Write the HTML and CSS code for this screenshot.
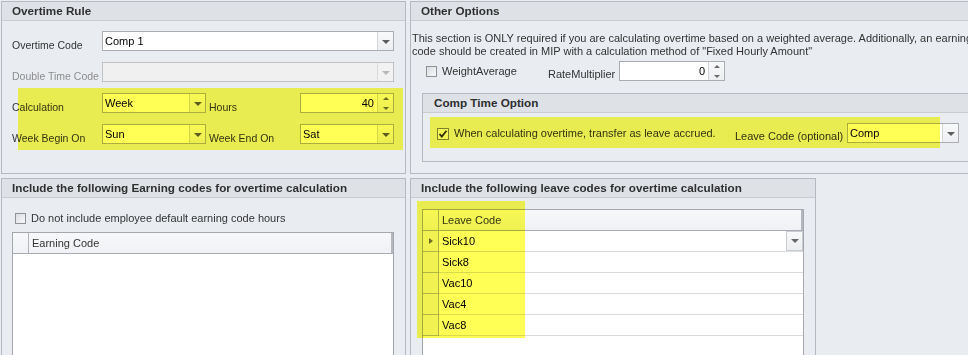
FILE: index.html
```html
<!DOCTYPE html>
<html lang="en">
<head>
    <meta charset="UTF-8">
    <meta name="viewport" content="width=device-width, initial-scale=1.0">
    <title>Overtime Rule</title>
    <link rel="stylesheet" href="styles.css">
</head>
<body>

    <div class="layout">

        <!-- Overtime rule -->
        <div class="panel">
            <div class="panel-head">Overtime Rule</div>
            <div class="form-grid">
                <span class="lbl">Overtime Code</span>
                <div class="combo span3"><span class="val">Comp 1</span><span class="drop"></span></div>

                <span class="lbl off">Double Time Code</span>
                <div class="combo span3 off"><span class="val"></span><span class="drop"></span></div>

                <span class="lbl">Calculation</span>
                <div class="combo"><span class="val">Week</span><span class="drop"></span></div>
                <span class="lbl pad">Hours</span>
                <div class="spin"><span class="val">40</span><span class="spin-btns"><i class="up"></i><i class="down"></i></span></div>

                <span class="lbl">Week Begin On</span>
                <div class="combo"><span class="val">Sun</span><span class="drop"></span></div>
                <span class="lbl pad">Week End On</span>
                <div class="combo"><span class="val">Sat</span><span class="drop"></span></div>
            </div>
            <div class="mark mark-rule"></div>
        </div>

        <!-- Other options -->
        <div class="panel">
            <div class="panel-head">Other Options</div>
            <div class="note">
                This section is ONLY required if you are calculating overtime based on a weighted average. Additionally, an earning<br>
                code should be created in MIP with a calculation method of "Fixed Hourly Amount"
            </div>
            <div class="opt-row">
                <label class="check-item weight"><span class="cb"></span>WeightAverage</label>
                <span class="rate-lbl">RateMultiplier</span>
                <div class="spin rate"><span class="val">0</span><span class="spin-btns"><i class="up"></i><i class="down"></i></span></div>
            </div>

            <div class="group">
                <div class="group-head">Comp Time Option</div>
                <div class="group-body">
                    <label class="check-item accrue">
                        <span class="cb on"><svg width="10" height="10" viewBox="0 0 10 10"><path d="M1.5 5l2.3 2.6L8.5 1.8" fill="none" stroke="#2b2b2b" stroke-width="1.7"/></svg></span>
                        When calculating overtime, transfer as leave accrued.
                    </label>
                    <span class="leave-lbl">Leave Code (optional)</span>
                    <div class="combo comp"><span class="val">Comp</span><span class="drop"></span></div>
                </div>
                <div class="mark mark-comp"></div>
            </div>
        </div>

        <!-- Earning codes -->
        <div class="panel">
            <div class="panel-head">Include the following Earning codes for overtime calculation</div>
            <div class="earn-check">
                <label class="check-item"><span class="cb"></span>Do not include employee default earning code hours</label>
            </div>
            <div class="grid earn-grid">
                <div class="grid-head"><span class="ind"></span><span class="cell">Earning Code</span></div>
            </div>
        </div>

        <!-- Leave codes -->
        <div class="panel leave-panel">
            <div class="panel-head">Include the following leave codes for overtime calculation</div>
            <div class="grid leave-grid">
                <div class="grid-head"><span class="ind"></span><span class="cell">Leave Code</span></div>
                <div class="grid-row current"><span class="ind"><i class="row-arrow"></i></span><span class="cell">Sick10<span class="row-drop"></span></span></div>
                <div class="grid-row"><span class="ind"></span><span class="cell">Sick8</span></div>
                <div class="grid-row"><span class="ind"></span><span class="cell">Vac10</span></div>
                <div class="grid-row"><span class="ind"></span><span class="cell">Vac4</span></div>
                <div class="grid-row"><span class="ind"></span><span class="cell">Vac8</span></div>
            </div>
            <div class="mark mark-leave"></div>
        </div>

    </div>

</body>
</html>
```

FILE: styles.css
```css
html, body {
    height: 355px;
    overflow: hidden;
}

body {
    margin: 0;
    padding: 1px 0 0 1px;
    box-sizing: border-box;
    background: #e9ecf1;
    font-family: "Liberation Sans", Arial, sans-serif;
    font-size: 11px;
    color: #333;
}

.layout {
    display: grid;
    grid-template-columns: 405px 600px;
    grid-template-rows: 173px 220px;
    gap: 4px;
}

.panel {
    position: relative;
    box-sizing: border-box;
    border: 1px solid #b6bac0;
    background: #e9ecf1;
    overflow: hidden;
}

.panel-head {
    height: 18px;
    line-height: 18px;
    padding-left: 10px;
    background: #dee2e7;
    border-bottom: 1px solid #c9cdd2;
    font-weight: bold;
    font-size: 11.7px;
    color: #2f2f2f;
    white-space: nowrap;
}

.leave-panel {
    width: 406px;
}

/* form rows */
.form-grid {
    display: grid;
    grid-template-columns: 90px 104px 94px 94px;
    grid-auto-rows: 20px;
    row-gap: 11px;
    padding: 10px 0 0 10px;
}

.lbl {
    font-size: 10.5px;
    line-height: 20px;
    padding-top: 4px;
    white-space: nowrap;
}

.lbl.pad {
    padding-left: 3px;
}

.lbl.off {
    color: #8d8d8d;
}

.span3 {
    grid-column: span 3;
}

.combo, .spin {
    display: flex;
    height: 20px;
    box-sizing: border-box;
    border: 1px solid #abadb3;
    background: #fff;
    color: #000;
}

.combo .val, .spin .val {
    flex: 1;
    padding-left: 2px;
    line-height: 18px;
    white-space: nowrap;
}

.spin .val {
    text-align: right;
    padding: 0 3px 0 0;
}

.drop, .spin-btns {
    width: 15px;
    border-left: 1px solid #d3d5d9;
    background: linear-gradient(#f8f9fa, #eceef1);
    display: flex;
    align-items: center;
    justify-content: center;
}

.drop::after {
    content: "";
    border-left: 4px solid transparent;
    border-right: 4px solid transparent;
    border-top: 4px solid #5c5c5c;
    margin-top: 1px;
}

.spin-btns {
    flex-direction: column;
    gap: 7px;
}

.spin-btns i {
    display: block;
    border-left: 3px solid transparent;
    border-right: 3px solid transparent;
}

.spin-btns .up {
    border-bottom: 3px solid #6a6a6a;
}

.spin-btns .down {
    border-top: 3px solid #6a6a6a;
}

.combo.off {
    background: #f0f0f0;
    border-color: #c0c2c6;
}

.combo.off .drop {
    background: #f2f2f2;
    border-left-color: #dadada;
}

.combo.off .drop::after {
    border-top-color: #b8b8b8;
}

/* other options */
.note {
    padding: 11px 0 0 1px;
    line-height: 13px;
    white-space: nowrap;
}

.opt-row {
    display: flex;
    align-items: flex-start;
    margin-top: 3px;
    padding-left: 15px;
}

.check-item {
    display: flex;
    align-items: center;
    gap: 5px;
    line-height: 13px;
    white-space: nowrap;
}

.cb {
    flex: none;
    width: 11px;
    height: 11px;
    box-sizing: border-box;
    border: 1px solid #8f9297;
    background: linear-gradient(135deg, #dadde0, #f8f8f9);
    display: flex;
    align-items: center;
    justify-content: center;
}

.cb.on {
    width: 12px;
    height: 12px;
    border-color: #7d8086;
    background: #f4f5f6;
}

.weight {
    width: 122px;
    margin-top: 4px;
}

.rate-lbl {
    width: 71px;
    margin-top: 7px;
    line-height: 13px;
}

.spin.rate {
    width: 106px;
}

.group {
    position: relative;
    width: 600px;
    margin: 12px 0 0 11px;
    border: 1px solid #b6bac0;
}

.group-head {
    height: 18px;
    line-height: 18px;
    padding-left: 11px;
    background: #dee2e7;
    border-bottom: 1px solid #c9cdd2;
    font-weight: bold;
    font-size: 11.7px;
    color: #2f2f2f;
}

.group-body {
    display: flex;
    align-items: flex-start;
    height: 48px;
    box-sizing: border-box;
    padding: 10px 0 0 14px;
}

.accrue {
    width: 298px;
    margin-top: 4px;
}

.leave-lbl {
    width: 112px;
    margin-top: 7px;
    line-height: 13px;
    white-space: nowrap;
}

.combo.comp {
    width: 112px;
}

/* grids */
.earn-check {
    padding: 14px 0 0 13px;
}

.grid {
    width: 382px;
    height: 200px;
    box-sizing: border-box;
    border: 1px solid #a4a8ae;
    background: #fff;
}

.earn-grid {
    margin: 7px 0 0 10px;
}

.leave-grid {
    margin: 11px 0 0 11px;
}

.grid-head {
    display: flex;
    height: 20px;
    border-bottom: 1px solid #a9adb3;
    background: linear-gradient(#f7f8fa, #eff1f4);
    box-shadow: inset -2px 0 #b4b8be;
}

.grid-row {
    display: flex;
    height: 21px;
}

.ind {
    flex: none;
    width: 15px;
    border-right: 1px solid #b1b5bb;
    display: flex;
    align-items: center;
    justify-content: center;
}

.grid-row .ind {
    background: #f1f2f4;
    border-bottom: 1px solid #b1b5bb;
}

.cell {
    flex: 1;
    display: flex;
    padding-left: 3px;
    line-height: 20px;
    color: #000;
}

.grid-head .cell {
    color: #333;
}

.grid-row .cell {
    border-bottom: 1px solid #d9dbde;
}

.row-arrow {
    display: block;
    border-top: 3px solid transparent;
    border-bottom: 3px solid transparent;
    border-left: 4px solid #6b6b6b;
}

.row-drop {
    width: 17px;
    height: 20px;
    margin-left: auto;
    box-sizing: border-box;
    border: 1px solid #c8ccd2;
    background: linear-gradient(#f8f9fa, #eceef1);
    display: flex;
    align-items: center;
    justify-content: center;
}

.row-drop::after {
    content: "";
    border-left: 4px solid transparent;
    border-right: 4px solid transparent;
    border-top: 4px solid #666;
}

/* yellow highlighter marks */
.mark {
    position: absolute;
    background: #ffff55;
    mix-blend-mode: multiply;
}

.mark-rule {
    left: 16px;
    top: 86px;
    width: 385px;
    height: 62px;
}

.mark-comp {
    left: 7px;
    top: 23px;
    width: 510px;
    height: 31px;
}

.mark-leave {
    left: 6px;
    top: 22px;
    width: 108px;
    height: 137px;
}
```
